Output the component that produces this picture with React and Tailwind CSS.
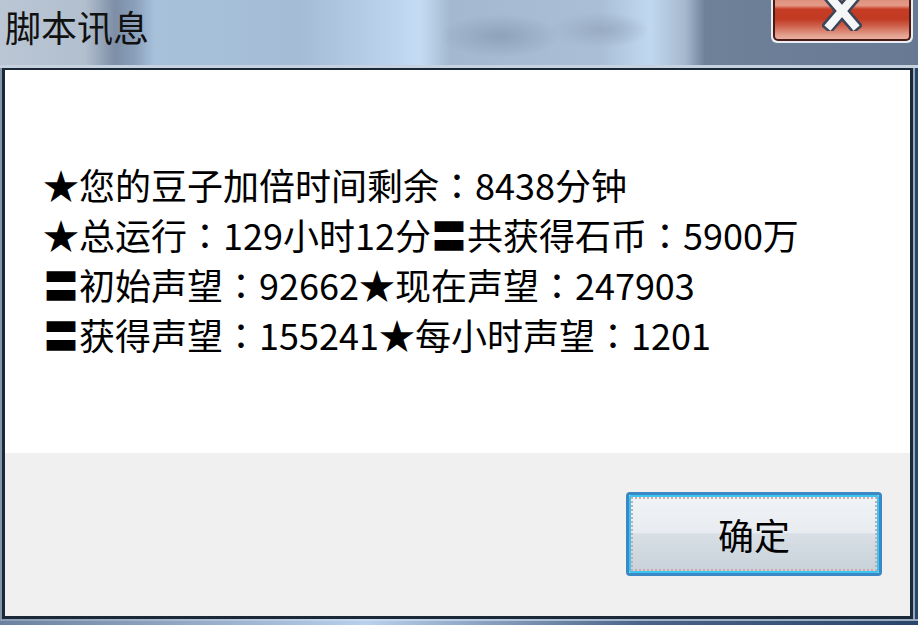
import React from "react";

const lines = [
  "★您的豆子加倍时间剩余：8438分钟",
  "★总运行：129小时12分〓共获得石币：5900万",
  "〓初始声望：92662★现在声望：247903",
  "〓获得声望：155241★每小时声望：1201",
];

// full-width colon centred in its cell, as the old system font draws it
function Line({ text }) {
  const parts = text.split("：");
  return (
    <div className="whitespace-nowrap">
      {parts.map((p, i) => (
        <React.Fragment key={i}>
          {p}
          {i < parts.length - 1 && <span className="font-['Noto_Sans_CJK_TC',sans-serif]">：</span>}
        </React.Fragment>
      ))}
    </div>
  );
}

function CloseGlyph() {
  return (
    <svg width="40" height="40" viewBox="0 0 40 40">
      <path d="M8 6 L32 34 M32 6 L8 34" stroke="#3c4658" strokeWidth="13" strokeLinecap="square" />
      <path d="M8 6 L32 34 M32 6 L8 34" stroke="#f4f6f8" strokeWidth="8" strokeLinecap="square" />
    </svg>
  );
}

export default function App() {
  return (
    <div className="w-[918px] h-[625px] overflow-hidden flex flex-col bg-[#6a7c94] font-['Noto_Sans_CJK_SC','Noto_Sans',sans-serif]">
      {/* Title bar */}
      <div className="h-[65px] flex items-start justify-between pl-[5px] pr-[5px] bg-[radial-gradient(ellipse_60px_22px_at_500px_36px,#8ea2ba,transparent),radial-gradient(ellipse_50px_18px_at_600px_30px,#98abc2,transparent),linear-gradient(90deg,#bac6d4_0px,#b2bfce_85px,#7d8ea6_115px,#8aa0bb_135px,#a8c1db_155px,#a4bcd6_300px,#bcd4ee_395px,#c4dcf3_420px,#a4b9d0_450px,#aabfd6_600px,#c0d8f0_650px,#a6b9ce_685px,#6f8199_705px,#687a93_918px)]">
        <div className="text-[36px] leading-[52px] text-[#111]">脚本讯息</div>
        <div className="w-[142px] h-[52px] -mt-[9px] rounded-b-[6px] border-2 border-t-0 border-[#e8eef4] bg-[#e8eef4]">
          <div className="h-full rounded-b-[5px] border-2 border-t-0 border-[#4a1a14] flex justify-center bg-[linear-gradient(180deg,#d88272_0%,#e49a88_30%,#c63c24_38%,#c23a22_58%,#cd5e4a_72%,#e3a08e_92%,#eab0a0_100%)]">
            <CloseGlyph />
          </div>
        </div>
      </div>
      <div className="h-[3px] bg-[#c6d2df]" />

      {/* Window body */}
      <div className="flex h-[551px]">
        <div className="w-[2px] bg-[#8494aa]" />
        <div className="w-[911px] flex flex-col border-x-[3px] border-t-[2px] border-b-[3px] border-[#1b2838]">
          <div className="h-[383px] bg-white pl-[38px] pt-[89px] text-[36px] leading-[50px] text-black">
            {lines.map((l, i) => (
              <Line key={i} text={l} />
            ))}
          </div>
          <div className="flex-1 bg-[#f0f0f0] flex justify-end items-start pt-[39px] pr-[28px]">
            <button className="w-[256px] h-[84px] rounded-[4px] border-[3px] border-[#3a88c4] p-0">
              <div className="h-full rounded-[2px] border-2 border-[#3ac6f0] bg-[linear-gradient(180deg,#f0f3f6_0%,#e8ecf0_48%,#d8dfe5_50%,#c8d2da_100%)]">
                <div className="h-full border-2 border-dotted border-[#d2a8a8] flex items-center justify-center text-[36px] leading-none text-black">
                  确定
                </div>
              </div>
            </button>
          </div>
        </div>
        <div className="w-[2px] bg-[#98a9be]" />
        <div className="w-[3px] bg-[#29456a]" />
      </div>
      <div className="h-[2px] bg-[linear-gradient(90deg,#8c9cb2,#c6daf0_40%,#9fb2c8_70%,#98a9be)]" />
      <div className="h-[4px] bg-[linear-gradient(90deg,#6d80a0,#b8d0ec_40%,#4a6488_70%,#29456a)]" />
    </div>
  );
}
